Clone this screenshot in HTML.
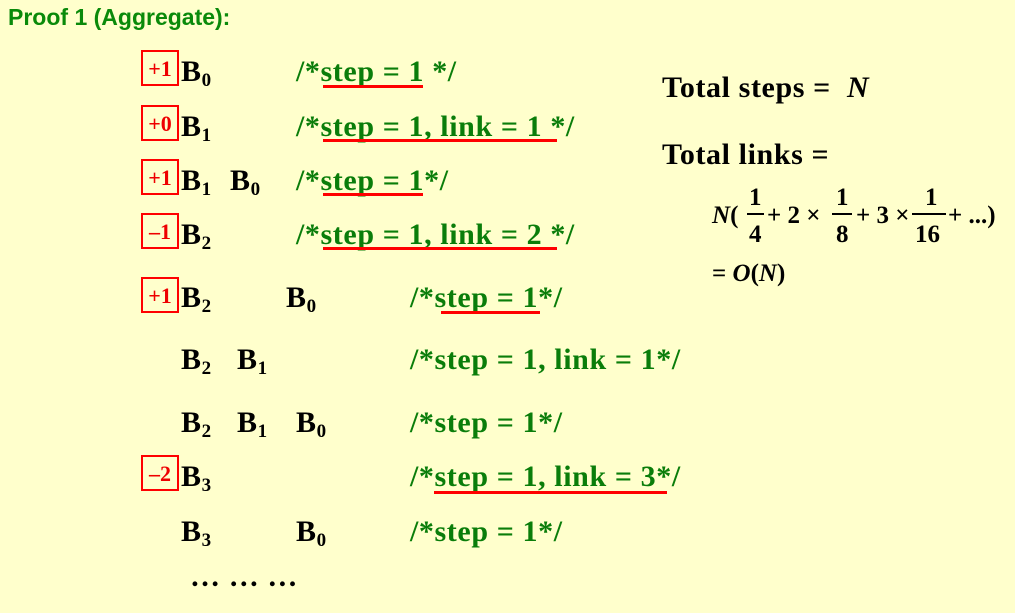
<html><head><style>
body{margin:0;width:1015px;height:613px;background:#FFFFCC;position:relative;overflow:hidden;font-family:"Liberation Serif",serif;font-weight:bold}
.a{position:absolute;line-height:28px;font-size:30px;letter-spacing:0.6px;white-space:nowrap}
.k{color:#000}
.g{color:#0a7d0a}
sub{font-size:19px;vertical-align:-5px;line-height:0;letter-spacing:0}
.box{position:absolute;border:2px solid #f00;width:34px;height:32px;color:#e00;font-size:22px;line-height:34px;text-align:center}
.u{position:absolute;height:3px;background:#f00}
.t{position:absolute;font-family:"Liberation Sans",sans-serif;font-weight:bold;color:#0a8a0a;font-size:23px;left:8px;top:4px}
.f{font-size:25px;letter-spacing:0}
</style></head><body>
<div class="t">Proof 1 (Aggregate):</div>

<div class="box" style="left:141px;top:50px">+1</div>
<div class="box" style="left:141px;top:105px">+0</div>
<div class="box" style="left:141px;top:159px">+1</div>
<div class="box" style="left:141px;top:213px">–1</div>
<div class="box" style="left:141px;top:277px">+1</div>
<div class="box" style="left:141px;top:455px">–2</div>

<div class="a k" style="left:181px;top:58px">B<sub>0</sub></div>
<div class="a g" style="left:296px;top:58px">/*step = 1 */</div>
<div class="a k" style="left:181px;top:113px">B<sub>1</sub></div>
<div class="a g" style="left:296px;top:113px">/*step = 1, link = 1 */</div>
<div class="a k" style="left:181px;top:167px">B<sub>1</sub></div>
<div class="a k" style="left:230px;top:167px">B<sub>0</sub></div>
<div class="a g" style="left:296px;top:167px">/*step = 1*/</div>
<div class="a k" style="left:181px;top:221px">B<sub>2</sub></div>
<div class="a g" style="left:296px;top:221px">/*step = 1, link = 2 */</div>
<div class="a k" style="left:181px;top:284px">B<sub>2</sub></div>
<div class="a k" style="left:286px;top:284px">B<sub>0</sub></div>
<div class="a g" style="left:410px;top:284px">/*step = 1*/</div>
<div class="a k" style="left:181px;top:346px">B<sub>2</sub></div>
<div class="a k" style="left:237px;top:346px">B<sub>1</sub></div>
<div class="a g" style="left:410px;top:346px">/*step = 1, link = 1*/</div>
<div class="a k" style="left:181px;top:409px">B<sub>2</sub></div>
<div class="a k" style="left:237px;top:409px">B<sub>1</sub></div>
<div class="a k" style="left:296px;top:409px">B<sub>0</sub></div>
<div class="a g" style="left:410px;top:409px">/*step = 1*/</div>
<div class="a k" style="left:181px;top:463px">B<sub>3</sub></div>
<div class="a g" style="left:410px;top:463px">/*step = 1, link = 3*/</div>
<div class="a k" style="left:181px;top:518px">B<sub>3</sub></div>
<div class="a k" style="left:296px;top:518px">B<sub>0</sub></div>
<div class="a g" style="left:410px;top:518px">/*step = 1*/</div>
<div class="a k" style="left:190px;top:563px">… … …</div>

<div class="u" style="left:323px;top:85px;width:100px"></div>
<div class="u" style="left:323px;top:139px;width:234px"></div>
<div class="u" style="left:323px;top:193px;width:100px"></div>
<div class="u" style="left:323px;top:247px;width:234px"></div>
<div class="u" style="left:441px;top:311px;width:99px"></div>
<div class="u" style="left:434px;top:491px;width:233px"></div>

<div class="a k" style="left:662px;top:74px">Total steps = &nbsp;<i>N</i></div>
<div class="a k" style="left:662px;top:141px">Total links =</div>
<div class="a k f" style="left:712px;top:202px"><i>N</i>(</div>
<div class="a k f" style="left:749px;top:184px">1</div>
<div style="position:absolute;left:747px;top:213px;width:17px;height:2px;background:#000"></div>
<div class="a k f" style="left:749px;top:221px">4</div>
<div class="a k f" style="left:767px;top:202px">+ 2 ×</div>
<div class="a k f" style="left:836px;top:184px">1</div>
<div style="position:absolute;left:832px;top:213px;width:20px;height:2px;background:#000"></div>
<div class="a k f" style="left:836px;top:221px">8</div>
<div class="a k f" style="left:856px;top:202px">+ 3 ×</div>
<div class="a k f" style="left:925px;top:184px">1</div>
<div style="position:absolute;left:912px;top:213px;width:34px;height:2px;background:#000"></div>
<div class="a k f" style="left:915px;top:221px">16</div>
<div class="a k f" style="left:948px;top:202px">+ ...)</div>
<div class="a k f" style="left:712px;top:260px">= <i>O</i>(<i>N</i>)</div>
</body></html>
